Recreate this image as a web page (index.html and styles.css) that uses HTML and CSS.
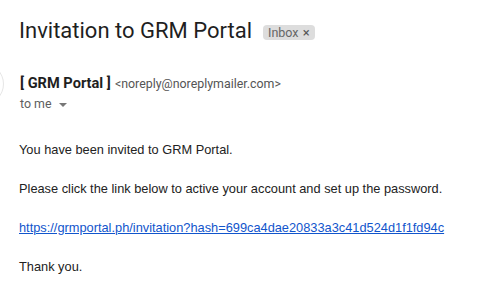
FILE: index.html
```html
<!DOCTYPE html>
<html lang="en">
<head>
  <meta charset="UTF-8" />
  <meta name="viewport" content="width=device-width, initial-scale=1.0" />
  <title>Invitation to GRM Portal</title>
  <link rel="stylesheet" href="styles.css">
</head>
<body>
  <div class="mail">
    <div class="subject-row">
      <h1 class="subject">Invitation to GRM Portal</h1>
      <span class="label">Inbox <span class="label-x">&times;</span></span>
    </div>

    <div class="sender-row">
      <div class="avatar"></div>
      <div class="sender-info">
        <div class="from">
          <span class="from-name">[ GRM Portal ]</span>
          <span class="from-email">&lt;noreply@noreplymailer.com&gt;</span>
        </div>
        <div class="to">to me <span class="caret"></span></div>
      </div>
    </div>

    <div class="body">
      <p>You have been invited to GRM Portal.</p>
      <p>Please click the link below to active your account and set up the password.</p>
      <p><a href="#">https://grmportal.ph/invitation?hash=699ca4dae20833a3c41d524d1f1fd94c</a></p>
      <p>Thank you.</p>
    </div>
  </div>
</body>
</html>
```

FILE: styles.css
```css
body {
  margin: 0;
  background: #fff;
  color: #222;
  font-family: Roboto, "Liberation Sans", Arial, sans-serif;
  overflow: hidden;
}
.mail {
  padding: 14px 0 0 19px;
}
.subject-row {
  display: flex;
  align-items: center;
  gap: 11px;
}
.subject {
  margin: 0;
  font-size: 22px;
  font-weight: 400;
  color: #1f1f1f;
  line-height: 34px;
}
.label {
  background: #ddd;
  color: #666;
  font-size: 12.5px;
  line-height: 15px;
  padding: 0 5px;
  border-radius: 4px;
  margin-top: 2px;
}
.label-x {
  font-size: 13px;
  color: #555;
  margin-left: 1px;
}
.sender-row {
  display: flex;
  align-items: flex-start;
  margin-top: 25px;
}
.avatar {
  width: 40px;
  height: 40px;
  border-radius: 50%;
  border: 1px solid #e6e6e6;
  margin-left: -57px;
  margin-right: 16px;
  margin-top: -10px;
  flex-shrink: 0;
}
.from {
  line-height: 20px;
}
.from-name {
  font-weight: 700;
  font-size: 14.6px;
  color: #1f1f1f;
}
.from-email {
  font-size: 12.4px;
  color: #555;
}
.to {
  font-size: 12.4px;
  color: #5e5e5e;
  line-height: 20px;
}
.caret {
  display: inline-block;
  width: 0;
  height: 0;
  border-left: 4px solid transparent;
  border-right: 4px solid transparent;
  border-top: 4px solid #777;
  margin-left: 4px;
  vertical-align: middle;
}
.body {
  margin-top: 26px;
  font-family: "Liberation Sans", Arial, sans-serif;
  font-size: 12.8px;
  line-height: 19.5px;
}
.body p {
  margin: 0 0 19.5px;
}
.body a {
  color: #15c;
}
```
